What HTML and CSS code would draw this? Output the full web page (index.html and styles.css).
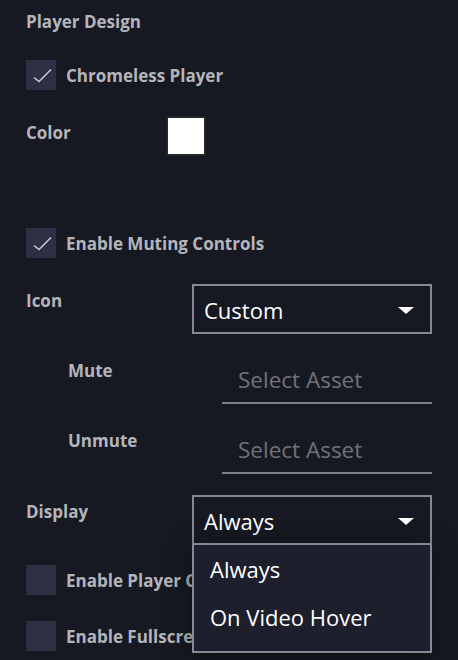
FILE: index.html
```html
<!DOCTYPE html>
<html lang="en">
<head>
    <meta charset="UTF-8">
    <meta name="viewport" content="width=device-width, initial-scale=1.0">
    <title>Player Design</title>
    <link rel="stylesheet" href="styles.css">
</head>
<body>
    <section class="panel">
        <h2 class="title">Player Design</h2>

        <div class="check-row">
            <span class="box checked">
                <svg width="30" height="30" viewBox="0 0 30 30"><path d="M8 17.5 L13 21.5 L25 9.5" fill="none" stroke="#c9cad3" stroke-width="1.6"/></svg>
            </span>
            <span class="check-label">Chromeless Player</span>
        </div>

        <div class="row color-row">
            <span class="label color-label">Color</span>
            <span class="swatch"></span>
        </div>

        <div class="check-row muting">
            <span class="box checked">
                <svg width="30" height="30" viewBox="0 0 30 30"><path d="M8 17.5 L13 21.5 L25 9.5" fill="none" stroke="#c9cad3" stroke-width="1.6"/></svg>
            </span>
            <span class="check-label">Enable Muting Controls</span>
        </div>

        <div class="row">
            <span class="label field-label">Icon</span>
            <div class="select">
                <span>Custom</span>
                <span class="arrow"></span>
            </div>
        </div>

        <div class="row sub-row">
            <span class="label sub-label">Mute</span>
            <div class="asset">Select Asset</div>
        </div>

        <div class="row sub-row">
            <span class="label sub-label">Unmute</span>
            <div class="asset">Select Asset</div>
        </div>

        <div class="row display-row">
            <span class="label field-label">Display</span>
            <div class="select-wrap">
                <div class="select">
                    <span>Always</span>
                    <span class="arrow"></span>
                </div>
                <ul class="menu">
                    <li>Always</li>
                    <li>On Video Hover</li>
                </ul>
            </div>
        </div>

        <div class="check-row off-first">
            <span class="box"></span>
            <span class="check-label">Enable Player Controls</span>
        </div>

        <div class="check-row off-second">
            <span class="box"></span>
            <span class="check-label">Enable Fullscreen Button</span>
        </div>
    </section>
</body>
</html>
```

FILE: styles.css
```css
/* Basic reset */
* {
    margin: 0;
    padding: 0;
    box-sizing: border-box;
}

body {
    font-family: 'Open Sans', 'Noto Sans', sans-serif;
    background-color: #171922;
    color: #b4b5bc;
    width: 458px;
    height: 660px;
    overflow: hidden;
}

.panel {
    padding: 10px 26px 0 26px;
}

.title {
    font-size: 17px;
    font-weight: bold;
    line-height: 24px;
}

/* Checkbox rows */
.check-row {
    display: flex;
    align-items: center;
    margin-top: 26px;
    height: 30px;
}

.box {
    width: 30px;
    height: 30px;
    background-color: #2e2f45;
    flex-shrink: 0;
}

.box svg {
    display: block;
}

.check-label {
    margin-left: 10px;
    font-size: 17px;
    font-weight: bold;
    white-space: nowrap;
}

/* Label rows */
.row {
    display: flex;
    align-items: flex-start;
}

.label {
    font-size: 17px;
    font-weight: bold;
    line-height: 24px;
    flex-shrink: 0;
}

.color-row {
    margin-top: 26px;
}

.color-label {
    width: 140px;
    padding-top: 5px;
}

.swatch {
    width: 40px;
    height: 40px;
    background-color: #fff;
    border: 2px solid #24252b;
}

.muting {
    margin-top: 72px;
}

.check-row.muting + .row {
    margin-top: 26px;
}

.field-label {
    width: 166px;
    padding-top: 5px;
}

.select {
    width: 240px;
    height: 50px;
    border: 2px solid #868897;
    display: flex;
    align-items: center;
    justify-content: space-between;
    padding: 2px 16px 0 10px;
    color: #fff;
    font-size: 22px;
}

.arrow {
    width: 0;
    height: 0;
    border-left: 8px solid transparent;
    border-right: 8px solid transparent;
    border-top: 7px solid #fff;
}

/* Asset pickers */
.sub-row {
    padding-left: 42px;
    margin-top: 27px;
}

.sub-label {
    width: 154px;
}

.sub-row .label {
    margin-top: -2px;
}

.asset {
    width: 210px;
    height: 43px;
    border-bottom: 2px solid #7c7e8d;
    color: #6f717a;
    font-size: 22.5px;
    padding-left: 16px;
    line-height: 37px;
}

.display-row {
    margin-top: 21px;
}

.select-wrap {
    position: relative;
}

.menu {
    position: absolute;
    top: 48px;
    left: 0;
    width: 240px;
    list-style: none;
    background-color: #1d1f2c;
    border: 2px solid #868897;
    box-shadow: 0 6px 24px rgba(0, 0, 0, 0.45);
    color: #fff;
    font-size: 22px;
    padding: 3px 0 7px 0;
    z-index: 2;
}

.menu li {
    height: 48px;
    line-height: 42px;
    padding-left: 16px;
}

.off-first {
    margin-top: 20px;
}

.off-second {
    margin-top: 26px;
}
```
